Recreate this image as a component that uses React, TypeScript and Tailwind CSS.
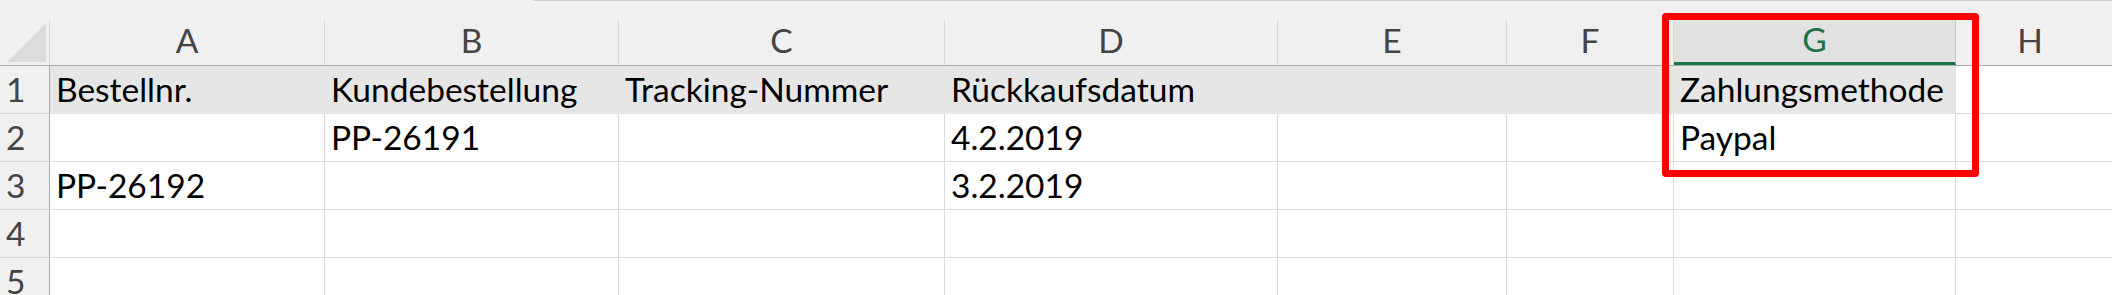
import React from "react";

type Col = { key: string; w: string };

const cols: Col[] = [
  { key: "A", w: "w-[275px]" },
  { key: "B", w: "w-[294px]" },
  { key: "C", w: "w-[326px]" },
  { key: "D", w: "w-[333px]" },
  { key: "E", w: "w-[229px]" },
  { key: "F", w: "w-[167px]" },
  { key: "G", w: "w-[282px]" },
];

const data: Record<number, Record<string, string>> = {
  1: {
    A: "Bestellnr.",
    B: "Kundebestellung",
    C: "Tracking-Nummer",
    D: "Rückkaufsdatum",
    G: "Zahlungsmethode",
  },
  2: { B: "PP-26191", D: "4.2.2019", G: "Paypal" },
  3: { A: "PP-26192", D: "3.2.2019" },
  4: {},
  5: {},
};

function RowHeader({ n }: { n: number }) {
  return (
    <div className="w-[50px] shrink-0 bg-[#f0f0f0] border-r border-r-[#ababab] border-b border-b-[#d5d5d5] flex items-end pl-[6px] pb-[7px] text-[#444444] leading-none">
      {n}
    </div>
  );
}

function DataRow({ n }: { n: number }) {
  const filled = n === 1;
  const row = data[n];
  return (
    <div className="flex h-[48px]">
      <RowHeader n={n} />
      {cols.map((c) => (
        <div
          key={c.key}
          className={`${c.w} shrink-0 flex items-end pl-[6px] pb-[7px] leading-none whitespace-nowrap overflow-visible ${
            filled
              ? "bg-[#e6e6e6] border-r border-r-[#e6e6e6] border-b border-b-[#e6e6e6]"
              : "bg-white border-r border-r-[#dadada] border-b border-b-[#dadada]"
          }`}
        >
          {row[c.key] ?? ""}
        </div>
      ))}
      <div className="flex-1 bg-white border-b border-b-[#dadada]" />
    </div>
  );
}

export default function App() {
  return (
    <div className="relative w-[2112px] h-[295px] overflow-hidden bg-white text-black text-[33.5px] font-['Lato',sans-serif]">
      {/* top strip */}
      <div className="h-[20px] bg-[#f0f0f0] flex">
        <div className="ml-[533px] flex-1 h-px bg-[#cfcfcf]" />
      </div>
      {/* column headers */}
      <div className="flex h-[46px] bg-[#f0f0f0] border-b border-b-[#ababab]">
        <div className="w-[50px] shrink-0 border-r border-r-[#d8d8d8] relative">
          <svg
            className="absolute left-[7px] top-[3px]"
            width="40"
            height="40"
            viewBox="0 0 40 40"
          >
            <polygon points="0,39 39,39 39,0" fill="#dcdcdc" />
          </svg>
        </div>
        {cols.map((c) =>
          c.key === "G" ? (
            <div
              key={c.key}
              className={`${c.w} shrink-0 bg-[#e1e1e1] border-r border-r-[#c6c6c6] border-b-[3px] border-b-[#217346] flex items-end justify-center pb-[6px] leading-none text-[#217346]`}
            >
              {c.key}
            </div>
          ) : (
            <div
              key={c.key}
              className={`${c.w} shrink-0 border-r border-r-[#d8d8d8] flex items-end justify-center pb-[8px] leading-none text-[#444444]`}
            >
              {c.key}
            </div>
          )
        )}
        <div className="flex-1 flex items-end justify-center pb-[8px] leading-none text-[#444444] pr-[8px]">
          H
        </div>
      </div>
      {[1, 2, 3, 4, 5].map((n) => (
        <DataRow key={n} n={n} />
      ))}
      {/* red annotation box */}
      <div className="absolute left-[1662px] top-[13px] w-[317px] h-[164px] border-[7px] border-[#ff0000] rounded-[4px]" />
    </div>
  );
}
